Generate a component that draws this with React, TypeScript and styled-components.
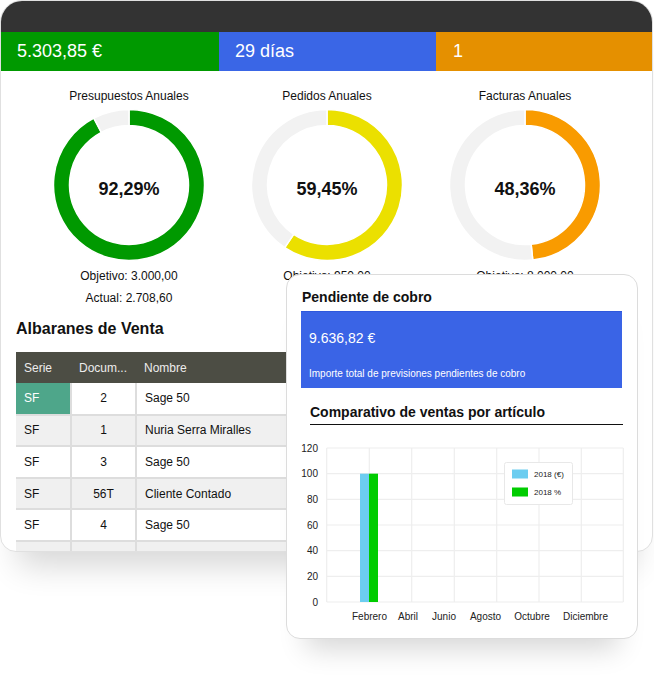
import React from "react";
import styled, { createGlobalStyle } from "styled-components";

const GlobalStyle = createGlobalStyle`
  * { box-sizing: border-box; }
  body {
    margin: 0;
    background: #fff;
    font-family: "Liberation Sans", Arial, sans-serif;
    color: #111;
  }
`;

const Stage = styled.div`
  position: relative;
  width: 654px;
  height: 679px;
  overflow: hidden;
`;

const Window = styled.div`
  width: 653px;
  height: 552px;
  border: 1px solid #e0e0e0;
  border-radius: 22px 22px 16px 16px;
  overflow: hidden;
  background: #fff;
  box-shadow: 0 32px 32px -18px rgba(0, 0, 0, 0.16);
`;

const TitleBar = styled.div`
  height: 31px;
  background: #333333;
`;

const StatBar = styled.div`
  display: grid;
  grid-template-columns: 218px 217px 1fr;
  height: 39px;
`;

const Stat = styled.div<{ $bg: string; $pad: number }>`
  display: flex;
  align-items: center;
  padding-left: ${(p) => p.$pad}px;
  background: ${(p) => p.$bg};
  color: #fff;
  font-size: 18px;
`;

const GaugeRow = styled.div`
  display: grid;
  grid-template-columns: repeat(3, 198px);
  padding: 17px 0 0 29px;
`;

const Gauge = styled.div`
  display: flex;
  flex-direction: column;
  align-items: center;
`;

const GaugeTitle = styled.div`
  font-size: 12px;
  line-height: 16px;
  margin-bottom: 6px;
`;

const GaugeMeta = styled.div`
  margin-top: 5px;
  font-size: 12px;
  line-height: 22px;
  text-align: center;
`;

const SectionTitle = styled.h2`
  margin: 10px 0 13px 15px;
  font-size: 16px;
  line-height: 20px;
  font-weight: bold;
`;

const Table = styled.table`
  margin-left: 15px;
  width: 300px;
  border-collapse: collapse;
  font-size: 12px;
`;

const HeadCell = styled.th`
  height: 31px;
  padding: 0 8px;
  background: #4c4d44;
  color: #ececec;
  font-weight: normal;
  text-align: left;
  white-space: nowrap;
`;

const Row = styled.tr<{ $alt: boolean }>`
  background: ${(p) => (p.$alt ? "#f0f0f0" : "#fff")};
`;

const Cell = styled.td<{ $center?: boolean; $selected?: boolean }>`
  height: 31.6px;
  padding: 0 8px;
  border: 2px solid #dddddd;
  border-top: none;
  text-align: ${(p) => (p.$center ? "center" : "left")};
  background: ${(p) => (p.$selected ? "#4ea68a" : "transparent")};
  color: ${(p) => (p.$selected ? "#fff" : "#111")};
  white-space: nowrap;
  &:first-child { border-left: none; }
`;

const Card = styled.div`
  position: absolute;
  left: 286px;
  top: 274px;
  width: 352px;
  height: 365px;
  border: 1px solid #dcdcdc;
  border-radius: 14px;
  background: #fff;
  padding-top: 14px;
  box-shadow: 0 30px 26px -20px rgba(0, 0, 0, 0.16);
`;

const CardTitle = styled.div`
  margin-left: 15px;
  font-size: 14px;
  line-height: 16px;
  font-weight: bold;
`;

const Balance = styled.div`
  margin: 6px 0 0 14px;
  width: 321px;
  height: 77px;
  background: #3a64e6;
  border-top: 1px solid #2f58dc;
  color: #fff;
  display: flex;
  flex-direction: column;
  justify-content: space-between;
  padding: 18px 8px 8px;
`;

const Amount = styled.div`
  font-size: 14px;
  line-height: 16px;
`;

const Caption = styled.div`
  font-size: 10px;
  line-height: 12px;
`;

const ChartHeading = styled.div`
  margin: 16px 0 0 23px;
  width: 313px;
  padding-bottom: 4px;
  border-bottom: 1px solid #111;
  font-size: 14px;
  line-height: 16px;
  font-weight: bold;
`;

const ChartSvg = styled.svg`
  display: block;
  margin: 13px 0 0 9px;
  font-family: "Liberation Sans", Arial, sans-serif;
`;

const polar = (cx: number, cy: number, r: number, deg: number) => {
  const a = ((deg - 90) * Math.PI) / 180;
  return [cx + r * Math.cos(a), cy + r * Math.sin(a)];
};

const sector = (from: number, to: number, ro: number, ri: number) => {
  const c = 75;
  const large = to - from > 180 ? 1 : 0;
  const [x1, y1] = polar(c, c, ro, from);
  const [x2, y2] = polar(c, c, ro, to);
  const [x3, y3] = polar(c, c, ri, to);
  const [x4, y4] = polar(c, c, ri, from);
  return `M${x1} ${y1} A${ro} ${ro} 0 ${large} 1 ${x2} ${y2} L${x3} ${y3} A${ri} ${ri} 0 ${large} 0 ${x4} ${y4} Z`;
};

const Donut: React.FC<{ pct: number; color: string; label: string }> = ({ pct, color, label }) => {
  const end = (pct / 100) * 360;
  return (
    <svg width="150" height="150" viewBox="0 0 150 150" overflow="visible">
      <path d={sector(0, end, 75.5, 59.5)} fill={color} stroke="#fff" strokeWidth="1.5" />
      <path d={sector(end, 359.99, 75.5, 59.5)} fill="#f2f2f2" stroke="#fff" strokeWidth="1.5" />
      <text x="75" y="85" textAnchor="middle" fontSize="18" fontWeight="bold" fill="#111"
        fontFamily='"Liberation Sans", Arial, sans-serif'>
        {label}
      </text>
    </svg>
  );
};

const gauges = [
  { title: "Presupuestos Anuales", pct: 92.29, color: "#009900", label: "92,29%", objetivo: "3.000,00", actual: "2.708,60" },
  { title: "Pedidos Anuales", pct: 59.45, color: "#ebe000", label: "59,45%", objetivo: "950,00", actual: "564,78" },
  { title: "Facturas Anuales", pct: 48.36, color: "#f99b00", label: "48,36%", objetivo: "8.000,00", actual: "3.868,80" },
];

const rows = [
  { serie: "SF", doc: "2", nombre: "Sage 50" },
  { serie: "SF", doc: "1", nombre: "Nuria Serra Miralles" },
  { serie: "SF", doc: "3", nombre: "Sage 50" },
  { serie: "SF", doc: "56T", nombre: "Cliente Contado" },
  { serie: "SF", doc: "4", nombre: "Sage 50" },
  { serie: "", doc: "", nombre: "" },
];

const vLines = [326.7, 369.3, 411.7, 454.3, 496.7, 539, 581.3, 623.3];
const yTicks = [120, 100, 80, 60, 40, 20, 0];
const months = [
  { name: "Febrero", x: 369.5 },
  { name: "Abril", x: 408 },
  { name: "Junio", x: 444 },
  { name: "Agosto", x: 485.5 },
  { name: "Octubre", x: 532 },
  { name: "Diciembre", x: 585.5 },
];

const SalesChart: React.FC = () => {
  const top = 448;
  const bottom = 602;
  const step = (bottom - top) / 6;
  return (
    <ChartSvg width="340" height="192" viewBox="0 0 340 192">
      <g transform="translate(-296 -438)">
        {yTicks.map((t, i) => (
          <g key={t}>
            <line x1={326.7} x2={623.3} y1={top + i * step} y2={top + i * step} stroke="#eeeeee" strokeWidth="1.2" />
            <text x="318" y={top + i * step + 3.5} textAnchor="end" fontSize="10" fill="#222">{t}</text>
          </g>
        ))}
        {vLines.map((x) => (
          <line key={x} x1={x} x2={x} y1={top} y2={bottom} stroke="#eeeeee" strokeWidth="1.2" />
        ))}
        <rect x="360" y={top + step} width="9" height={bottom - top - step} fill="#6ccdf0" />
        <rect x="369" y={top + step} width="9" height={bottom - top - step} fill="#00cc00" />
        {months.map((m) => (
          <text key={m.name} x={m.x} y="619.5" textAnchor="middle" fontSize="10" fill="#222">{m.name}</text>
        ))}
        <rect x="504.5" y="462.5" width="68" height="42" rx="2" fill="#fff" stroke="#e8e8e8" />
        <rect x="512" y="469.5" width="16" height="9" fill="#6ccdf0" />
        <rect x="512" y="487.5" width="16" height="9" fill="#00cc00" />
        <text x="534" y="477" fontSize="8" fill="#222">2018 (€)</text>
        <text x="534" y="495" fontSize="8" fill="#222">2018 %</text>
      </g>
    </ChartSvg>
  );
};

const App: React.FC = () => {
  return (
    <Stage>
      <GlobalStyle />
      <Window>
        <TitleBar />
        <StatBar>
          <Stat $bg="#009900" $pad={16}>5.303,85 €</Stat>
          <Stat $bg="#3a66e6" $pad={16}>29 días</Stat>
          <Stat $bg="#e59000" $pad={17}>1</Stat>
        </StatBar>
        <GaugeRow>
          {gauges.map((g) => (
            <Gauge key={g.title}>
              <GaugeTitle>{g.title}</GaugeTitle>
              <Donut pct={g.pct} color={g.color} label={g.label} />
              <GaugeMeta>
                Objetivo: {g.objetivo}
                <br />
                Actual: {g.actual}
              </GaugeMeta>
            </Gauge>
          ))}
        </GaugeRow>
        <SectionTitle>Albaranes de Venta</SectionTitle>
        <Table>
          <colgroup>
            <col style={{ width: 55 }} />
            <col style={{ width: 65 }} />
            <col />
          </colgroup>
          <thead>
            <tr>
              <HeadCell>Serie</HeadCell>
              <HeadCell>Docum...</HeadCell>
              <HeadCell>Nombre</HeadCell>
            </tr>
          </thead>
          <tbody>
            {rows.map((r, i) => (
              <Row key={i} $alt={i % 2 === 1}>
                <Cell $selected={i === 0}>{r.serie}</Cell>
                <Cell $center>{r.doc}</Cell>
                <Cell>{r.nombre}</Cell>
              </Row>
            ))}
          </tbody>
        </Table>
      </Window>
      <Card>
        <CardTitle>Pendiente de cobro</CardTitle>
        <Balance>
          <Amount>9.636,82 €</Amount>
          <Caption>Importe total de previsiones pendientes de cobro</Caption>
        </Balance>
        <ChartHeading>Comparativo de ventas por artículo</ChartHeading>
        <SalesChart />
      </Card>
    </Stage>
  );
};

export default App;
